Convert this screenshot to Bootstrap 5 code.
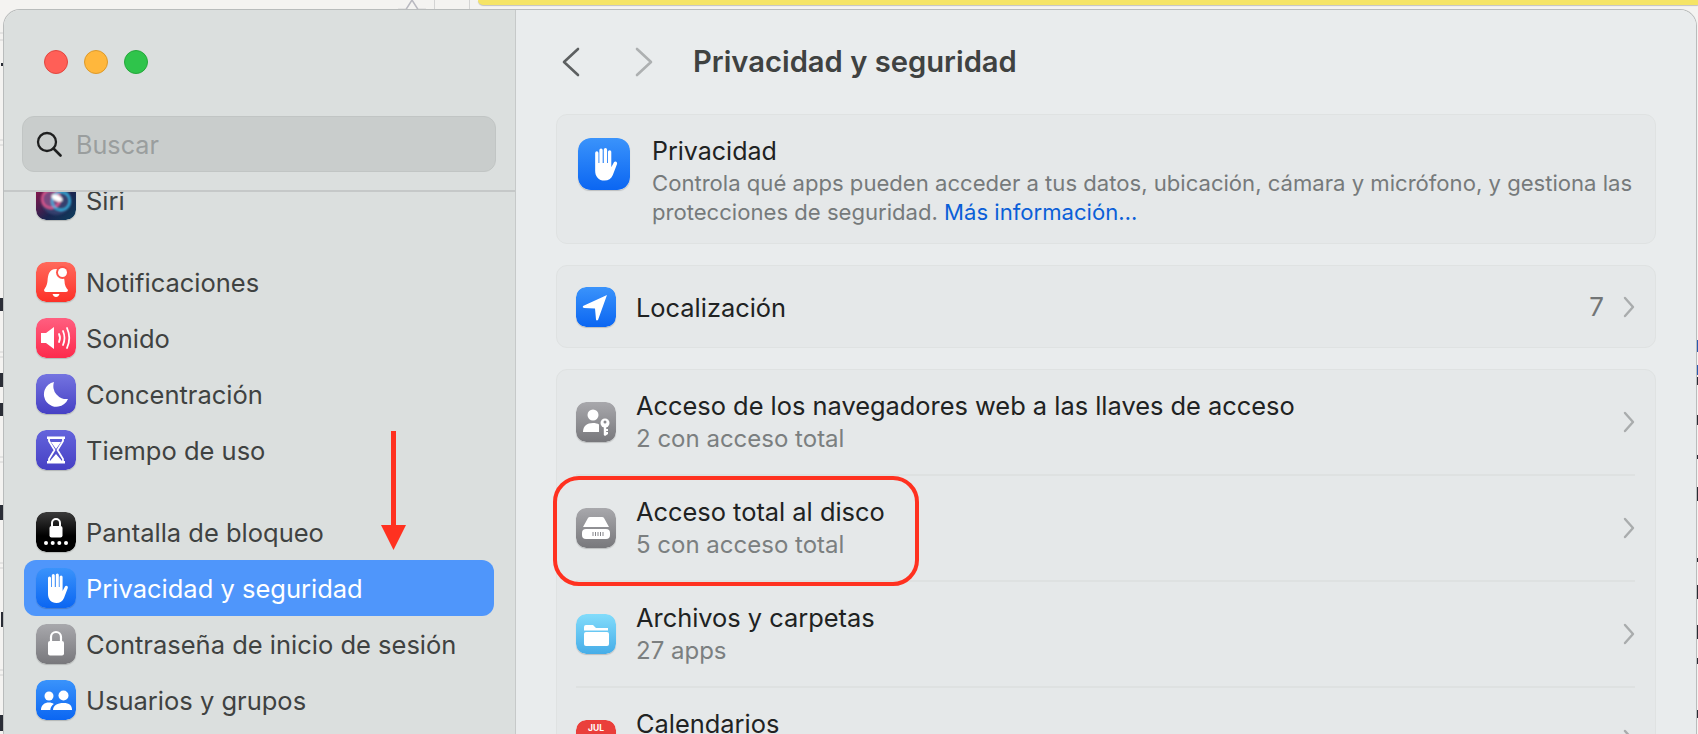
<!DOCTYPE html>
<html lang="es">
<head>
  <meta charset="UTF-8">
  <meta name="viewport" content="width=device-width, initial-scale=1.0">
  <title>Privacidad y seguridad</title>
  <link href="https://cdn.jsdelivr.net/npm/bootstrap@5.3.0/dist/css/bootstrap.min.css" rel="stylesheet">
  <style>
    html, body { height: 100%; overflow: hidden; }
    body {
      background: #f4f3f1;
      font-family: Inter, "Liberation Sans", sans-serif;
      position: relative;
    }
    /* lo que asoma de la pagina de detras */
    .behind-yellow {
      position: absolute; left: 478px; top: 0; width: 1220px; height: 5px;
      background: #f5e466; border-bottom-left-radius: 6px;
      box-shadow: 0 1px 1px rgba(0,0,0,.2);
    }
    .behind-strip { position: absolute; left: 0; top: 0; width: 1698px; height: 734px; }

    .mac-window {
      position: absolute; left: 4px; top: 10px; width: 1692px; height: 724px;
      border-radius: 16px 16px 0 0;
      box-shadow: 0 0 0 1px #b9bcbc;
      overflow: hidden;
      display: flex;
    }
    .side-pane {
      width: 512px; flex: none;
      background: #dbdfde;
      border-right: 1px solid #c6c9c9;
      height: 100%;
    }
    .traffic { padding: 40px 0 0 40px; gap: 16px; }
    .traffic span { width: 24px; height: 24px; border-radius: 50%; border: 1px solid; }
    .t-red { background: #ff5f57; border-color: #e2463f !important; }
    .t-yellow { background: #ffb73c; border-color: #dd9a2a !important; }
    .t-green { background: #2fc44b; border-color: #25a83b !important; }
    .search-box {
      margin: 42px 19px 0 18px; height: 56px;
      background: #c9cdcc; border: 1px solid #c1c5c4; border-radius: 12px;
      padding-left: 13px; gap: 14px;
      color: #9a9e9e; font-size: 25.2px;
    }
    .search-word { padding-top: 3px; }
    .side-rule { height: 2px; background: #c5c8c8; margin-top: 18px; }
    .side-list { height: 532px; overflow: hidden; padding: 0 21px 0 20px; }
    .side-inner { margin-top: -20px; }
    .side-row {
      height: 56px; gap: 10px; padding-left: 12px;
      color: #3f4241; font-size: 25.5px; border-radius: 12px;
    }
    .side-row span { padding-top: 2px; }
    .side-row.current { background: #4f96fb; color: #fff; }
    .app-icon {
      width: 40px; height: 40px; flex: none; border-radius: 10px; display: block;
      box-shadow: 0 1px 1px rgba(0,0,0,.18);
    }
    .group-gap { height: 26px; }

    .main-pane { flex: 1; background: #e9eced; min-width: 0; height: 100%; }
    .top-row { height: 104px; padding-left: 46px; }
    .nav-arrow { width: 18px; height: 30px; flex: none; }
    .nav-next { margin-left: 55px; }
    .page-title { font-size: 29.2px; font-weight: 600; color: #3f4241; margin: 0 0 0 40px; }
    .set-panel {
      margin: 0 40px;
      background: #e5e8e9; border: 1px solid #dfe2e2; border-radius: 11px;
    }
    .intro-panel { height: 130px; margin-bottom: 21px; padding: 23px 21px; gap: 22px; }
    .intro-panel .app-icon { width: 52px; height: 52px; border-radius: 12px; }
    .intro-copy { margin-top: -2px; }
    .intro-name { font-size: 25px; color: #202222; line-height: 30px; margin-bottom: 3px; }
    .intro-text { font-size: 22.1px; color: #767a7b; line-height: 29px; }
    .intro-text a { color: #0a5fd8; text-decoration: none; }
    .single-panel { height: 83px; margin-bottom: 21px; padding: 0 20px 0 19px; gap: 20px; }
    .single-panel .row-name { padding-top: 2px; }
    .row-name { font-size: 25.4px; color: #202222; line-height: 33px; }
    .row-sub { font-size: 24px; color: #7b7f80; line-height: 33px; min-height: 33px; }
    .count-num { font-size: 26px; color: #727576; margin-right: -1px; }
    .chev { width: 12px; height: 22px; flex: none; }
    .list-panel { height: 400px; padding: 0 20px 0 19px; }
    .list-line { height: 106px; gap: 20px; border-bottom: 2px solid #dee1e1; }

    .note-arrow { position: absolute; left: 381px; top: 431px; width: 25px; height: 119px; }
    .note-box {
      position: absolute; left: 553px; top: 476px; width: 366px; height: 110px;
      border: 4px solid #ff3120; border-radius: 26px;
    }
  </style>
</head>
<body>
  <div class="behind-yellow"></div>
  <svg class="behind-strip" viewBox="0 0 1698 734">
    <path d="M434.500 0 V10 M469.500 0 V10" stroke="#d4d4d4"/>
    <path d="M398 9.500 H406 L412 0 L418 9.500 H426" fill="none" stroke="#b9b9c0" stroke-width="1.500"/>
    <path d="M0 33 H4 M0 40 H4 M0 140 H4 M0 145 H4 M0 352 H4 M0 357 H4 M0 457 H4 M0 462 H4 M0 563 H4 M0 568 H4 M0 670 H4 M0 675 H4" stroke="#d2d2d2"/>
    <g fill="#2a2d36">
      <rect x="1" y="63" width="3" height="3"/>
      <rect x="0" y="298" width="3" height="13"/>
      <rect x="0" y="373" width="3" height="14"/>
      <rect x="0" y="403" width="3" height="13"/>
      <rect x="0" y="505" width="3" height="15"/>
      <rect x="1" y="612" width="2" height="15"/>
      <rect x="0" y="715" width="3" height="16"/>
      <rect x="1696" y="377" width="2" height="8"/>
      <rect x="1696" y="415" width="2" height="10"/>
      <rect x="1696" y="455" width="2" height="4"/>
      <rect x="1696" y="487" width="2" height="14"/>
      <rect x="1696" y="558" width="2" height="4"/>
      <rect x="1696" y="585" width="2" height="14"/>
      <rect x="1696" y="625" width="2" height="14"/>
      <rect x="1696" y="658" width="2" height="6"/>
      <rect x="1696" y="710" width="2" height="8"/>
    </g>
    <path d="M1697 340 V352 M1697 365 V375" stroke="#2a5ab0" stroke-width="2"/>
  </svg>

  <div class="mac-window">
    <aside class="side-pane">
      <div class="traffic d-flex">
        <span class="t-red"></span><span class="t-yellow"></span><span class="t-green"></span>
      </div>
      <div class="search-box d-flex align-items-center">
        <svg width="26" height="26" viewBox="0 0 26 26"><circle cx="11" cy="11" r="9" fill="none" stroke="#1e1f1f" stroke-width="2.300"/><path d="M17.500 17.500 L24.500 24.500" stroke="#1e1f1f" stroke-width="2.600" stroke-linecap="round"/></svg>
        <span class="search-word">Buscar</span>
      </div>
      <div class="side-rule"></div>
      <div class="side-list">
        <div class="side-inner">
          <div class="side-row d-flex align-items-center">
            <svg class="app-icon" viewBox="0 0 40 40"><defs><linearGradient id="gSiri" x1="0" y1="0" x2="1" y2="1"><stop offset="0" stop-color="#a4124a"/><stop offset=".6" stop-color="#1b2550"/><stop offset="1" stop-color="#0c3f5e"/></linearGradient><filter id="soft"><feGaussianBlur stdDeviation=".8"/></filter></defs><rect width="40" height="40" rx="10" fill="url(#gSiri)"/><g filter="url(#soft)"><circle cx="20" cy="20" r="15" fill="#34406e"/><circle cx="15" cy="19" r="9" fill="#7a4a80" stroke="#ee5a90" stroke-width="2"/><circle cx="25" cy="21" r="9" fill="none" stroke="#30b8e8" stroke-width="2"/><ellipse cx="21" cy="18" rx="6" ry="3" fill="#fff" transform="rotate(25 21 18)"/></g></svg>
            <span>Siri</span>
          </div>
          <div class="group-gap"></div>
          <div class="side-row d-flex align-items-center">
            <svg class="app-icon" viewBox="0 0 40 40"><defs><linearGradient id="gRed" x1="0" y1="0" x2="0" y2="1"><stop offset="0" stop-color="#ff6a5c"/><stop offset="1" stop-color="#fd3027"/></linearGradient></defs><rect width="40" height="40" rx="10" fill="url(#gRed)"/><path d="M20 7 C13 7 12 13 11.500 19 C11 24 9 26 8 28 Q8 30 10 30 L30 30 Q32 30 32 28 C30 26 28.500 23 28.500 19 C28 13 26 7 20 7 Z" fill="#fff"/><path d="M16.500 32 H23.500 Q22.500 35 20 35 Q17.500 35 16.500 32 Z" fill="#fff"/><circle cx="26.500" cy="10.500" r="6.500" fill="#fe5248"/><circle cx="26.500" cy="10.500" r="4.500" fill="#fff"/></svg>
            <span>Notificaciones</span>
          </div>
          <div class="side-row d-flex align-items-center">
            <svg class="app-icon" viewBox="0 0 40 40"><defs><linearGradient id="gPink" x1="0" y1="0" x2="0" y2="1"><stop offset="0" stop-color="#ff5f80"/><stop offset="1" stop-color="#fd2a4c"/></linearGradient></defs><rect width="40" height="40" rx="10" fill="url(#gPink)"/><path d="M5 15 H10 L18 9 V31 L10 25 H5 Z" fill="#fff"/><path d="M23 16 Q25 20 23 24 M27 13 Q30 20 27 27 M31 10 Q35.500 20 31 30" fill="none" stroke="#fff" stroke-width="1.800" stroke-linecap="round"/></svg>
            <span>Sonido</span>
          </div>
          <div class="side-row d-flex align-items-center">
            <svg class="app-icon" viewBox="0 0 40 40"><defs><linearGradient id="gIndigo" x1="0" y1="0" x2="0" y2="1"><stop offset="0" stop-color="#7474e0"/><stop offset="1" stop-color="#4640c4"/></linearGradient></defs><rect width="40" height="40" rx="10" fill="url(#gIndigo)"/><path d="M18 8 A12.500 12.500 0 1 0 32 25 A13 13 0 0 1 18 8 Z" fill="#fff"/></svg>
            <span>Concentración</span>
          </div>
          <div class="side-row d-flex align-items-center">
            <svg class="app-icon" viewBox="0 0 40 40"><defs><linearGradient id="gIndigo2" x1="0" y1="0" x2="0" y2="1"><stop offset="0" stop-color="#6464dc"/><stop offset="1" stop-color="#4640c4"/></linearGradient></defs><rect width="40" height="40" rx="10" fill="url(#gIndigo2)"/><path d="M13 8 H27 V11 L21.500 20 L27 29 V32 H13 V29 L18.500 20 L13 11 Z" fill="none" stroke="#fff" stroke-width="1.800" stroke-linejoin="round"/><path d="M11 6.500 H29 V9 H11 Z M11 31 H29 V33.500 H11 Z M15 12 H25 L20 19 Z M20 24 L26 31 H14 Z" fill="#fff"/></svg>
            <span>Tiempo de uso</span>
          </div>
          <div class="group-gap"></div>
          <div class="side-row d-flex align-items-center">
            <svg class="app-icon" viewBox="0 0 40 40"><defs><linearGradient id="gBlack" x1="0" y1="0" x2="0" y2="1"><stop offset="0" stop-color="#3c3c3c"/><stop offset=".6" stop-color="#000"/></linearGradient></defs><rect width="40" height="40" rx="10" fill="url(#gBlack)"/><rect x="13.500" y="14" width="13" height="11.500" rx="2" fill="#fff"/><path d="M16 14 V11 A4 4 0 0 1 24 11 V14" fill="none" stroke="#fff" stroke-width="2"/><g fill="#fff"><circle cx="10" cy="31" r="2"/><circle cx="16.700" cy="31" r="2"/><circle cx="23.300" cy="31" r="2"/><circle cx="30" cy="31" r="2"/></g></svg>
            <span>Pantalla de bloqueo</span>
          </div>
          <div class="side-row current d-flex align-items-center">
            <svg class="app-icon" viewBox="0 0 40 40"><defs><linearGradient id="gBlue" x1="0" y1="0" x2="0" y2="1"><stop offset="0" stop-color="#3a93fb"/><stop offset="1" stop-color="#0b66f2"/></linearGradient></defs><rect width="40" height="40" rx="10" fill="url(#gBlue)"/><path d="M12 21 V10 a1.500 1.500 0 0 1 3 0 V19 H15.800 V7.500 a1.500 1.500 0 0 1 3 0 V19 H19.800 V7 a1.500 1.500 0 0 1 3 0 V19 H23.600 V9 a1.500 1.500 0 0 1 3 0 V23 L29 18.500 a1.600 1.600 0 0 1 2.800 1.500 L28 30 C26.500 33.500 24 35 20.500 35 C15 35 12 31 12 26 Z" fill="#fff"/></svg>
            <span>Privacidad y seguridad</span>
          </div>
          <div class="side-row d-flex align-items-center">
            <svg class="app-icon" viewBox="0 0 40 40"><defs><linearGradient id="gGray" x1="0" y1="0" x2="0" y2="1"><stop offset="0" stop-color="#a8a8ac"/><stop offset="1" stop-color="#78787c"/></linearGradient></defs><rect width="40" height="40" rx="10" fill="url(#gGray)"/><rect x="12" y="17" width="16" height="14.500" rx="2" fill="#fff"/><path d="M15 17 V13 A5 5 0 0 1 25 13 V17" fill="none" stroke="#fff" stroke-width="2.200"/></svg>
            <span>Contraseña de inicio de sesión</span>
          </div>
          <div class="side-row d-flex align-items-center">
            <svg class="app-icon" viewBox="0 0 40 40"><rect width="40" height="40" rx="10" fill="url(#gBlue)"/><g fill="#fff"><circle cx="13" cy="16" r="4.500"/><circle cx="27.500" cy="15.500" r="5"/><path d="M5 30 C5 25 8.500 22.500 13 22.500 C15 22.500 16.500 23 17.800 24 C15.500 25.500 14.500 27.500 14.300 30 Z"/><path d="M17 30 C17 25.500 21.500 23 27.500 23 C33.500 23 36 25.500 36 30 Z"/></g></svg>
            <span>Usuarios y grupos</span>
          </div>
        </div>
      </div>
    </aside>

    <main class="main-pane">
      <div class="top-row d-flex align-items-center">
        <svg class="nav-arrow" viewBox="0 0 18 30"><path d="M16 2 L2 15 L16 28" fill="none" stroke="#5d6061" stroke-width="2.600" stroke-linecap="round" stroke-linejoin="round"/></svg>
        <svg class="nav-arrow nav-next" viewBox="0 0 18 30"><path d="M2 2 L16 15 L2 28" fill="none" stroke="#adb0b1" stroke-width="2.600" stroke-linecap="round" stroke-linejoin="round"/></svg>
        <h1 class="page-title">Privacidad y seguridad</h1>
      </div>

      <section class="set-panel intro-panel d-flex">
        <svg class="app-icon" viewBox="0 0 40 40"><rect width="40" height="40" rx="10" fill="url(#gBlue)"/><path transform="translate(3 3) scale(.85)" d="M12 21 V10 a1.500 1.500 0 0 1 3 0 V19 H15.800 V7.500 a1.500 1.500 0 0 1 3 0 V19 H19.800 V7 a1.500 1.500 0 0 1 3 0 V19 H23.600 V9 a1.500 1.500 0 0 1 3 0 V23 L29 18.500 a1.600 1.600 0 0 1 2.800 1.500 L28 30 C26.500 33.500 24 35 20.500 35 C15 35 12 31 12 26 Z" fill="#fff"/></svg>
        <div class="intro-copy">
          <div class="intro-name">Privacidad</div>
          <div class="intro-text">Controla qué apps pueden acceder a tus datos, ubicación, cámara y micrófono, y gestiona las protecciones de seguridad. <a href="#">Más información…</a></div>
        </div>
      </section>

      <section class="set-panel single-panel d-flex align-items-center">
        <svg class="app-icon" viewBox="0 0 40 40"><rect width="40" height="40" rx="10" fill="url(#gBlue)"/><path d="M31 8 L7 19 Q6 20.500 8 21 L19 21.500 L20 32.500 Q20.500 34 22 33 Z" fill="#fff"/></svg>
        <div class="row-name flex-grow-1">Localización</div>
        <span class="count-num">7</span>
        <svg class="chev" viewBox="0 0 12 22"><path d="M2 2 L10 11 L2 20" fill="none" stroke="#a9acad" stroke-width="2.400" stroke-linecap="round" stroke-linejoin="round"/></svg>
      </section>

      <section class="set-panel list-panel">
        <div class="list-line d-flex align-items-center">
          <svg class="app-icon" viewBox="0 0 40 40"><rect width="40" height="40" rx="10" fill="url(#gGray)"/><g fill="#fff"><circle cx="17" cy="13" r="5.500"/><path d="M7 30 C7 24 11 21 17 21 C19.500 21 21.500 21.500 23 22.500 V30 Z"/><circle cx="29" cy="21" r="4.500"/><path d="M27.800 24 H30.200 V27 H32 V29 H30.200 V30 H32 V32 L29 34 L27.800 33 Z"/></g><circle cx="29" cy="20" r="1.500" fill="#8a8a8e"/></svg>
          <div class="flex-grow-1">
            <div class="row-name">Acceso de los navegadores web a las llaves de acceso</div>
            <div class="row-sub">2 con acceso total</div>
          </div>
          <svg class="chev" viewBox="0 0 12 22"><path d="M2 2 L10 11 L2 20" fill="none" stroke="#a9acad" stroke-width="2.400" stroke-linecap="round" stroke-linejoin="round"/></svg>
        </div>
        <div class="list-line d-flex align-items-center">
          <svg class="app-icon" viewBox="0 0 40 40"><rect width="40" height="40" rx="10" fill="url(#gGray)"/><path d="M12 10 Q12.500 9 14 9 H26 Q27.500 9 28 10 L33 19 H7 Z" fill="#fff"/><rect x="6" y="21" width="28" height="10" rx="4" fill="#fff"/><path d="M17 24 V28 M19.500 24 V28 M22 24 V28 M24.500 24 V28 M27 24 V28" stroke="#85858a" stroke-width="1"/></svg>
          <div class="flex-grow-1">
            <div class="row-name">Acceso total al disco</div>
            <div class="row-sub">5 con acceso total</div>
          </div>
          <svg class="chev" viewBox="0 0 12 22"><path d="M2 2 L10 11 L2 20" fill="none" stroke="#a9acad" stroke-width="2.400" stroke-linecap="round" stroke-linejoin="round"/></svg>
        </div>
        <div class="list-line d-flex align-items-center">
          <svg class="app-icon" viewBox="0 0 40 40"><defs><linearGradient id="gSky" x1="0" y1="0" x2="0" y2="1"><stop offset="0" stop-color="#82dcfb"/><stop offset="1" stop-color="#46ade8"/></linearGradient></defs><rect width="40" height="40" rx="10" fill="url(#gSky)"/><path d="M8 13 Q8 11 10 11 H17 L20 14 H32 V16.500 H8 Z" fill="#fff"/><rect x="8" y="18" width="25" height="14" rx="2" fill="#fff"/></svg>
          <div class="flex-grow-1">
            <div class="row-name">Archivos y carpetas</div>
            <div class="row-sub">27 apps</div>
          </div>
          <svg class="chev" viewBox="0 0 12 22"><path d="M2 2 L10 11 L2 20" fill="none" stroke="#a9acad" stroke-width="2.400" stroke-linecap="round" stroke-linejoin="round"/></svg>
        </div>
        <div class="list-line d-flex align-items-center">
          <svg class="app-icon" viewBox="0 0 40 40"><rect width="40" height="40" rx="10" fill="#fff"/><path d="M0 15 V10 A10 10 0 0 1 10 0 H30 A10 10 0 0 1 40 10 V15 Z" fill="#ea3f3b"/><text x="20" y="11" text-anchor="middle" font-family="Inter, sans-serif" font-size="8.500" font-weight="700" fill="#fff">JUL</text></svg>
          <div class="flex-grow-1">
            <div class="row-name">Calendarios</div>
            <div class="row-sub"></div>
          </div>
          <svg class="chev" viewBox="0 0 12 22"><path d="M2 2 L10 11 L2 20" fill="none" stroke="#a9acad" stroke-width="2.400" stroke-linecap="round" stroke-linejoin="round"/></svg>
        </div>
      </section>
    </main>
  </div>

  <svg class="note-arrow" viewBox="0 0 25 119"><path d="M10 0 H15 V94 H25 L12.500 119 L0 94 H10 Z" fill="#ff3120"/></svg>
  <div class="note-box"></div>
  <script src="https://cdn.jsdelivr.net/npm/bootstrap@5.3.0/dist/js/bootstrap.bundle.min.js"></script>
</body>
</html>
